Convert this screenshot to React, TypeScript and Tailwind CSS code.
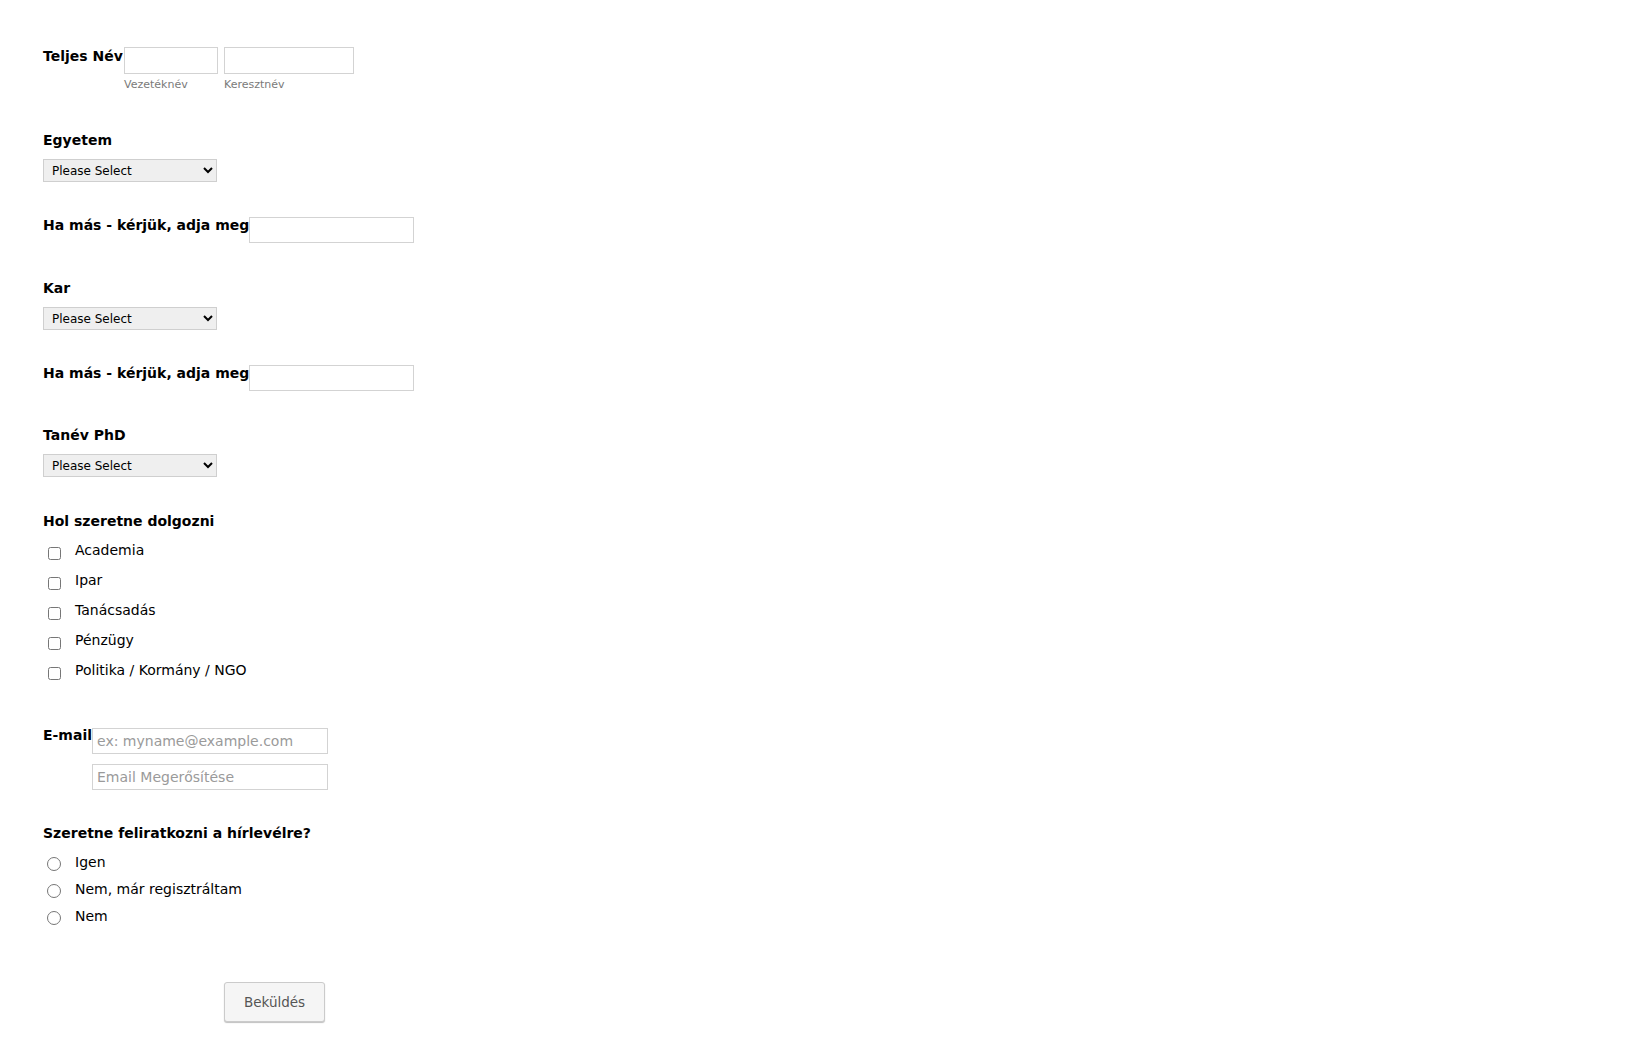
import React from 'react'

const font = "font-['DejaVu_Sans','Verdana',sans-serif]"

function SelectField({ label, mt }: { label: string; mt: string }) {
  return (
    <div className={mt}>
      <div className="font-bold leading-4">{label}</div>
      <select className="mt-[11px] block h-[23px] w-[174px] border border-[#cfcfcf] bg-[#efefef] pl-[4px] text-[12px] text-black">
        <option>Please Select</option>
      </select>
    </div>
  )
}

function OtherField({ mt }: { mt: string }) {
  return (
    <div className={`flex items-start ${mt}`}>
      <div className="font-bold leading-4">Ha más - kérjük, adja meg</div>
      <input type="text" className="block h-[26px] w-[165px] border border-[#d3d3d3] bg-white" />
    </div>
  )
}

const workOptions = ['Academia', 'Ipar', 'Tanácsadás', 'Pénzügy', 'Politika / Kormány / NGO']
const newsOptions = ['Igen', 'Nem, már regisztráltam', 'Nem']

export default function App() {
  return (
    <div className={`min-h-screen bg-white pl-[43px] pt-[47px] text-[14px] text-black ${font}`}>
      <div className="flex items-start">
        <div className="mt-px w-[81px] font-bold leading-4">Teljes Név</div>
        <div className="flex gap-[6px]">
          <div>
            <input type="text" className="block h-[27px] w-[94px] border border-[#d3d3d3] bg-white" />
            <div className="mt-[4px] text-[11px] leading-[13px] text-[#7a7a7a]">Vezetéknév</div>
          </div>
          <div>
            <input type="text" className="block h-[27px] w-[130px] border border-[#d3d3d3] bg-white" />
            <div className="mt-[4px] text-[11px] leading-[13px] text-[#7a7a7a]">Keresztnév</div>
          </div>
        </div>
      </div>

      <SelectField label="Egyetem" mt="mt-[41px]" />
      <OtherField mt="mt-[35px]" />
      <SelectField label="Kar" mt="mt-[37px]" />
      <OtherField mt="mt-[35px]" />
      <SelectField label="Tanév PhD" mt="mt-[36px]" />

      <div className="mt-[36px]">
        <div className="font-bold leading-4">Hol szeretne dolgozni</div>
        <div className="mt-[13px]">
          {workOptions.map((o) => (
            <label key={o} className="flex h-[30px] items-start">
              <input type="checkbox" className="m-0 ml-[5px] mt-[5px] h-[13px] w-[13px]" />
              <span className="ml-[14px] leading-4">{o}</span>
            </label>
          ))}
        </div>
      </div>

      <div className="mt-[35px] flex items-start">
        <div className="font-bold leading-4">E-mail</div>
        <div className="mt-px">
          <input
            type="email"
            placeholder="ex: myname@example.com"
            className="block h-[26px] w-[236px] border border-[#d3d3d3] bg-white px-[4px] placeholder:text-[#9a9a9a]"
          />
          <input
            type="email"
            placeholder="Email Megerősítése"
            className="mt-[10px] block h-[26px] w-[236px] border border-[#d3d3d3] bg-white px-[4px] placeholder:text-[#9a9a9a]"
          />
        </div>
      </div>

      <div className="mt-[35px]">
        <div className="font-bold leading-4">Szeretne feliratkozni a hírlevélre?</div>
        <div className="mt-[13px]">
          {newsOptions.map((o) => (
            <label key={o} className="flex h-[27px] items-start">
              <input type="radio" name="news" className="m-0 ml-[4px] mt-[3px] h-[14px] w-[14px]" />
              <span className="ml-[14px] leading-4">{o}</span>
            </label>
          ))}
        </div>
      </div>

      <div className="mt-[47px] pb-[40px] pl-[181px]">
        <button
          type="button"
          className="h-[40px] w-[101px] rounded-[3px] border border-[#cbcbcb] bg-[#f5f5f5] text-[13.5px] text-[#555] shadow-[0_1px_1px_rgba(0,0,0,0.25)]"
        >
          Beküldés
        </button>
      </div>
    </div>
  )
}
